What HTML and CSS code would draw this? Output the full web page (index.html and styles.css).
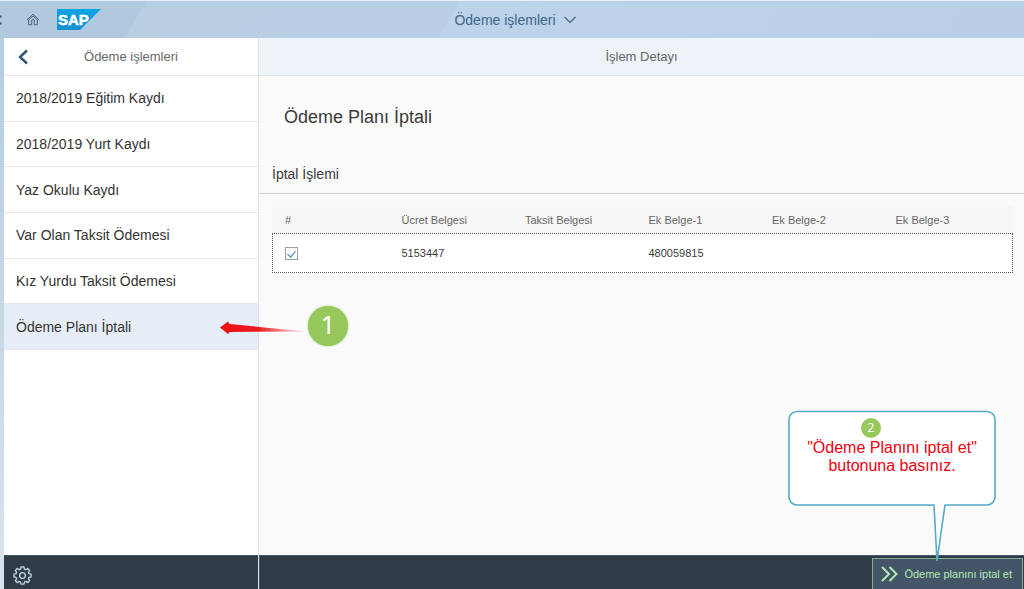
FILE: index.html
```html
<!DOCTYPE html>
<html lang="tr">
<head>
<meta charset="utf-8">
<title>Ödeme işlemleri</title>
<link rel="stylesheet" href="styles.css">
</head>
<body>
<header class="shell">
  <div class="shell-left">
    <svg class="edge-icon" width="4" height="16" viewBox="0 0 4 16" aria-hidden="true"><path d="M0 4.500h1.500M0 11.500h1.500" stroke="#35506c" stroke-width="2"/></svg>
    <button class="icon-button" type="button" aria-label="Ana sayfa">
      <svg width="14" height="13" viewBox="0 0 16 14" fill="none" stroke="#41617f" stroke-width="1.100" stroke-linejoin="round"><path d="M1 7.500 8 1l7 6.500M3 7.500v5.500h3.500V8.500a1.500 1.500 0 0 1 3 0V13H13V7.500L8 3z"/></svg>
    </button>
    <svg class="logo" width="44" height="21" viewBox="0 0 44 21" role="img" aria-label="SAP">
      <defs><linearGradient id="sap" x1="0" y1="0" x2="0" y2="1"><stop offset="0" stop-color="#0aa5e2"/><stop offset="1" stop-color="#1a8dd2"/></linearGradient></defs>
      <path d="M0 0h44L23 21H0z" fill="url(#sap)"/>
      <text class="logo-text" x="1" y="16">SAP</text>
    </svg>
  </div>
  <button class="shell-title" type="button">Ödeme işlemleri
    <svg width="12" height="8" viewBox="0 0 12 8" fill="none" stroke="#41668c" stroke-width="1.200"><path d="M.5 1 6 6.500 11.500 1"/></svg>
  </button>
  <div></div>
</header>
<div class="app">
  <nav class="master">
    <div class="bar master-bar">
      <button class="icon-button" type="button" aria-label="Geri">
        <svg width="10" height="16" viewBox="0 0 10 16" fill="none" stroke="#2d5475" stroke-width="2.400"><path d="M9 1.500 2 8l7 6.500"/></svg>
      </button>
      <span class="bar-title">Ödeme işlemleri</span>
    </div>
    <ul class="menu">
      <li><a href="#">2018/2019 Eğitim Kaydı</a></li>
      <li><a href="#">2018/2019 Yurt Kaydı</a></li>
      <li><a href="#">Yaz Okulu Kaydı</a></li>
      <li><a href="#">Var Olan Taksit Ödemesi</a></li>
      <li><a href="#">Kız Yurdu Taksit Ödemesi</a></li>
      <li class="selected"><a href="#">Ödeme Planı İptali</a>
        <div class="pointer">
          <svg width="88" height="14" viewBox="0 0 88 14" aria-hidden="true">
            <defs>
              <linearGradient id="red" x1="0" x2="1"><stop offset="0" stop-color="#f00d12"/><stop offset=".45" stop-color="#e81c20"/><stop offset="1" stop-color="#e84448" stop-opacity=".15"/></linearGradient>
            </defs>
            <path d="M0 6.500 8 .5 9.500 3 86 10.500 9.500 11 8 13z" fill="url(#red)"/>
          </svg>
          <span class="badge badge-large">1</span>
        </div>
      </li>
    </ul>
    <footer class="footer master-footer">
      <button class="icon-button" type="button" aria-label="Ayarlar">
        <svg width="19" height="19" viewBox="0 0 20 20" fill="none" stroke="#c3d9ea" stroke-width="1.400" stroke-linejoin="round"><path d="M8.500 1h3l.5 2.200 1.500.7 2-1.300 2 2-1.300 2 .7 1.500 2.100.4v3l-2.100.5-.7 1.500 1.300 2-2 2-2-1.300-1.500.7-.5 2.100h-3L8 16.900l-1.500-.7-2 1.300-2-2 1.300-2-.7-1.500L1 11.500v-3l2.100-.4.7-1.500-1.300-2 2-2 2 1.300L8 3.200z"/><circle cx="10" cy="10" r="3"/></svg>
      </button>
    </footer>
  </nav>
  <main class="detail">
    <div class="bar detail-bar"><span class="bar-title">İşlem Detayı</span></div>
    <div class="content">
      <h1 class="title">Ödeme Planı İptali</h1>
      <h2 class="section-title">İptal İşlemi</h2>
      <div class="table-area">
        <table class="records">
          <thead>
            <tr><th>#</th><th>Ücret Belgesi</th><th>Taksit Belgesi</th><th>Ek Belge-1</th><th>Ek Belge-2</th><th>Ek Belge-3</th></tr>
          </thead>
          <tbody>
            <tr><td><input class="check" type="checkbox" checked aria-label="5153447 belgesini seç"></td><td>5153447</td><td></td><td>480059815</td><td></td><td></td></tr>
          </tbody>
        </table>
      </div>
    </div>
    <footer class="footer detail-footer">
      <button class="cancel" type="button">
        <svg width="17" height="16" viewBox="0 0 17 16" fill="none" stroke="#b5e8b4" stroke-width="2"><path d="M1 1l7 7-7 7M8.500 1l7 7-7 7"/></svg>
        Ödeme planını iptal et
      </button>
      <div class="callout">
        <svg class="callout-shape" width="208" height="152" viewBox="0 0 208 152" aria-hidden="true"><path d="M9 1.500H199a8 8 0 0 1 8 8V87a8 8 0 0 1-8 8H157L149 151 146 95H9a8 8 0 0 1-8-8V9.500a8 8 0 0 1 8-8z" fill="#fff" stroke="#56aac4" stroke-width="1.600"/></svg>
        <span class="badge badge-small">2</span>
        <p class="callout-text">"Ödeme Planını iptal et" butonuna basınız.</p>
      </div>
    </footer>
  </main>
</div>
</body>
</html>
```
FILE: styles.css
```css
* { box-sizing: border-box; }

body {
  margin: 0;
  height: 100vh;
  display: flex;
  flex-direction: column;
  overflow: hidden;
  font-family: "Liberation Sans", Arial, sans-serif;
  color: #3b3b3b;
  background: linear-gradient(#b2cbe0, #d9e3ec);
}

button {
  font: inherit;
  border: 0;
  padding: 0;
  background: none;
  cursor: pointer;
}

.icon-button { display: flex; }

.shell {
  display: grid;
  grid-template-columns: 1fr auto 1fr;
  align-items: center;
  height: 38px;
  flex: none;
  border-top: 1px solid #e3effa;
  background: linear-gradient(120deg, #b1c9df 14%, #b7cee3 14%, #b9cfe5 44%, #bdd3e9 44%, #b8cfe5);
}

.shell-left { display: flex; align-items: center; }
.edge-icon { margin-right: 22px; }
.logo { margin-left: 17px; }
.logo-text { font-size: 15px; font-weight: bold; fill: #fff; stroke: #fff; stroke-width: .5px; }

.shell-title {
  display: flex;
  align-items: center;
  gap: 8px;
  padding-left: 6px;
  font-size: 14px;
  color: #41668c;
}

.app {
  flex: 1;
  min-height: 0;
  display: flex;
  margin-left: 4px;
}

.master {
  width: 255px;
  flex: none;
  display: flex;
  flex-direction: column;
  background: #fff;
  border-right: 1px solid #dde2e6;
}

.bar {
  display: flex;
  align-items: center;
  flex: none;
  height: 38px;
  border-bottom: 1px solid #e2e5e8;
}

.bar-title { flex: 1; text-align: center; font-size: 13px; color: #666; }
.master-bar { padding: 0 14px; }
.master-bar .bar-title { padding-right: 10px; }
.detail-bar { background: #edf3f8; }

.menu {
  list-style: none;
  margin: 0;
  padding: 0;
  display: grid;
  grid-auto-rows: 1fr;
  height: 274px;
}

.menu li {
  position: relative;
  display: flex;
  border-bottom: 1px solid #e4e7ea;
}

.menu a {
  flex: 1;
  display: flex;
  align-items: center;
  padding-left: 12px;
  font-size: 14px;
  color: #333;
  text-decoration: none;
}

.menu .selected { background: #e6edf6; }

.pointer {
  position: absolute;
  left: 216px;
  top: 2px;
  display: flex;
  align-items: center;
  z-index: 2;
}

.pointer svg { margin-top: 4px; }

.badge {
  display: flex;
  align-items: center;
  justify-content: center;
  border-radius: 50%;
  background: #97c85c;
  color: #fff;
  font-family: "Noto Sans", "Open Sans", sans-serif;
}

.badge-large {
  width: 40px;
  height: 40px;
  font-size: 26px;
  line-height: 32px;
  padding-bottom: 4px;
  box-shadow: 0 0 2px #93c65a;
}

.footer {
  height: 34px;
  flex: none;
  margin-top: auto;
  display: flex;
  background: #2f3c48;
  border-top: 1px solid #475a68;
}

.master-footer { padding-left: 9px; align-items: center; padding-top: 6px; }

.detail {
  flex: 1;
  min-width: 0;
  display: flex;
  flex-direction: column;
  background: #fafafa;
}

.title {
  margin: 0;
  padding: 30px 25px 0;
  font-size: 18px;
  line-height: 22px;
  font-weight: normal;
}

.section-title {
  margin: 0;
  padding: 36px 13px 9px;
  font-size: 14px;
  line-height: 20px;
  font-weight: normal;
  border-bottom: 1px solid #cfcfcf;
}

.table-area { padding: 12px 11px 0 13px; }

.records {
  width: 100%;
  table-layout: fixed;
  border-collapse: separate;
  border-spacing: 0;
  font-size: 11px;
}

.records th {
  height: 27px;
  padding: 0 6px;
  text-align: left;
  font-weight: normal;
  color: #666;
  background: #f6f6f6;
}

.records th:first-child, .records td:first-child { padding-left: 13px; }
.records td { height: 40px; padding: 0 6px; }
.records tbody tr { background: #fff; outline: 1px dotted #555; outline-offset: -1px; }

.check {
  appearance: none;
  display: flex;
  justify-content: center;
  width: 13px;
  height: 13px;
  margin: 0;
  border: 1px solid #9a9fa4;
  background: #fff;
}

.check:checked::after {
  content: "";
  width: 4px;
  height: 7px;
  margin-top: 1px;
  border: solid #3f74a8;
  border-width: 0 1px 1px 0;
  transform: rotate(40deg);
}

.detail-footer {
  position: relative;
  justify-content: flex-end;
  padding: 2px 1px 0 0;
  border-left: 1px solid #475a68;
}

.cancel {
  display: flex;
  align-items: center;
  gap: 6px;
  padding: 0 10px 0 8px;
  font-size: 11px;
  color: #b5e8b4;
  background: #435567;
  border: 1px solid #7fb08d;
  border-bottom: 0;
}

.callout {
  position: absolute;
  right: 28px;
  bottom: 27px;
  z-index: 1;
  width: 208px;
  height: 152px;
  display: flex;
  flex-direction: column;
  align-items: center;
  padding-top: 8px;
}

.callout-shape { position: absolute; inset: 0; z-index: -1; }

.badge-small {
  width: 20px;
  height: 20px;
  margin-right: 42px;
  padding-bottom: 2px;
  font-size: 12px;
}

.callout-text {
  margin: 0;
  width: 180px;
  padding-top: 1px;
  font-size: 16px;
  line-height: 18px;
  text-align: center;
  color: #f00010;
}
```
